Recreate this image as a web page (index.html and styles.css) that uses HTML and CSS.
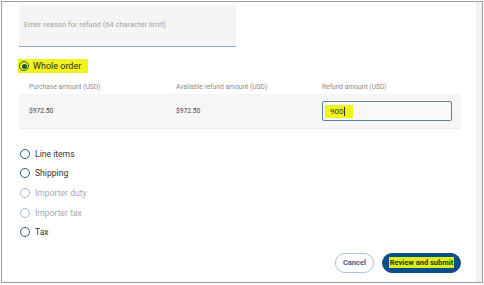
FILE: index.html
```html
<!DOCTYPE html>
<html>
<head>
<meta charset="utf-8">
<link rel="stylesheet" href="styles.css">
</head>
<body>
<div class="frame">
  <div class="content">
    <div class="reason">Enter reason for refund (64 character limit)</div>

    <div class="whole"><span class="mark"><span class="radio checked"></span><span class="whole-label">Whole order</span></span></div>

    <div class="table">
      <div class="thead">
        <div class="col c1">Purchase amount (USD)</div>
        <div class="col c2">Available refund amount (USD)</div>
        <div class="col c3">Refund amount (USD)</div>
      </div>
      <div class="trow">
        <div class="col c1">$972.50</div>
        <div class="col c2">$972.50</div>
        <div class="col c3"><div class="input"><span class="hl">900<span class="caret"></span></span></div></div>
      </div>
    </div>

    <div class="options">
      <div class="opt"><span class="radio"></span><span>Line items</span></div>
      <div class="opt"><span class="radio"></span><span>Shipping</span></div>
      <div class="opt disabled"><span class="radio"></span><span>Importer duty</span></div>
      <div class="opt disabled"><span class="radio"></span><span>Importer tax</span></div>
      <div class="opt"><span class="radio"></span><span>Tax</span></div>
    </div>

    <div class="actions">
      <button class="btn cancel">Cancel</button>
      <button class="btn submit"><span class="btn-hl">Review and submit</span></button>
    </div>
  </div>
  <div class="scroll"></div>
</div>
</body>
</html>
```
FILE: styles.css
```css
html, body {
  margin: 0;
  padding: 0;
  background: #fff;
}
body {
  font-family: Roboto, "Liberation Sans", sans-serif;
  color: #333;
}
.frame {
  margin: 1px 0 0 1px;
  width: 480px;
  height: 280px;
  border: 1px solid #9d9d9d;
  display: flex;
  background: #fff;
}
.content {
  flex: 1;
  padding: 3px 0 0 17px;
  display: flex;
  flex-direction: column;
}
.scroll {
  width: 6px;
  background: #f2f2f2;
}
.reason {
  width: 217px;
  height: 42px;
  box-sizing: border-box;
  background: #f5f5f5;
  border-bottom: 1px solid #8eabc6;
  font-size: 7.5px;
  color: #a2a2a2;
  padding-left: 5px;
  padding-bottom: 2px;
  display: flex;
  align-items: center;
}
.whole {
  margin-top: 12px;
  height: 14px;
  display: flex;
}
.mark {
  display: flex;
  align-items: center;
  gap: 4px;
  background: #f1f31e;
  padding: 0 7px 0 1px;
  margin-left: -1px;
}
.whole-label {
  font-size: 9px;
  color: #2d2d1a;
}
.radio {
  width: 8px;
  height: 8px;
  border: 1.5px solid #2b5d8a;
  border-radius: 50%;
  display: inline-block;
  flex: none;
  position: relative;
}
.radio.checked::after {
  content: "";
  position: absolute;
  left: 1.5px;
  top: 1.5px;
  width: 5px;
  height: 5px;
  border-radius: 50%;
  background: #1d5a2a;
}
.radio.checked {
  border-color: #1e5a46;
}
.table {
  margin-top: 7px;
  width: 442px;
}
.thead {
  height: 14px;
  display: flex;
  align-items: center;
  font-size: 6.7px;
  color: #8c8c8c;
}
.trow {
  height: 35px;
  background: #f6f6f6;
  display: flex;
  align-items: center;
  font-size: 6.7px;
  color: #444;
  border-bottom: 1px solid #ececec;
  box-sizing: border-box;
}
.col.c1 { width: 147px; padding-left: 10px; }
.col.c2 { width: 146px; }
.col.c3 { flex: 1; }
.input {
  width: 130px;
  height: 20px;
  box-sizing: border-box;
  border: 1px solid #5b81a4;
  border-radius: 2px;
  background: #f8f8f8;
  display: flex;
  align-items: center;
  padding-left: 2px;
  font-size: 8px;
  color: #3a3a10;
}
.hl {
  background: #f1f31e;
  padding: 2px 8px 2px 5px;
  display: inline-flex;
  align-items: center;
}
.caret {
  display: inline-block;
  width: 1px;
  height: 9px;
  background: #333;
  margin-left: 0.5px;
}
.options {
  margin-top: 15px;
  display: flex;
  flex-direction: column;
}
.opt {
  height: 19.6px;
  display: flex;
  align-items: center;
  gap: 5px;
  font-size: 8.6px;
  color: #333;
}
.opt .radio {
  margin-left: 1px;
}
.opt.disabled {
  color: #a9a9a9;
}
.opt.disabled .radio {
  border-color: #a7bccf;
}
.actions {
  margin-top: 11px;
  width: 442px;
  display: flex;
  justify-content: flex-end;
  gap: 8px;
}
.btn {
  height: 20px;
  border-radius: 10px;
  font-family: Roboto, "Liberation Sans", sans-serif;
  font-size: 7.5px;
  font-weight: 700;
  padding: 0;
  display: flex;
  align-items: center;
  justify-content: center;
}
.cancel {
  width: 39px;
  background: #fff;
  border: 1px solid #a9c2da;
  color: #3d6388;
}
.submit {
  width: 79px;
  background: #0b4f86;
  border: 1px solid #0b4f86;
  color: #1d3a10;
}
.btn-hl {
  background: #dbef1c;
  padding: 1px 1px;
}
```
